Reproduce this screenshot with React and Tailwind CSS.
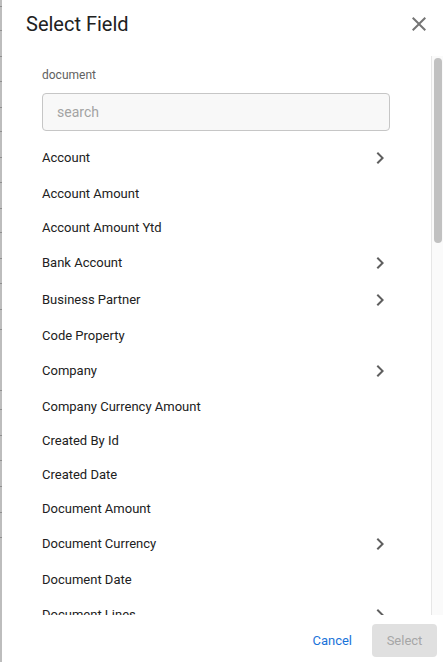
import React from "react";

const fields = [
  { name: "Account", nested: true },
  { name: "Account Amount" },
  { name: "Account Amount Ytd" },
  { name: "Bank Account", nested: true },
  { name: "Business Partner", nested: true },
  { name: "Code Property" },
  { name: "Company", nested: true },
  { name: "Company Currency Amount" },
  { name: "Created By Id" },
  { name: "Created Date" },
  { name: "Document Amount" },
  { name: "Document Currency", nested: true },
  { name: "Document Date" },
  { name: "Document Lines", nested: true },
  { name: "Document Number" },
];

// ticks of the page behind the backdrop
const ticks = [6, 30, 56, 81, 107, 131, 157, 182, 208, 232, 258, 283, 309, 329, 390, 409, 435, 460, 486, 512, 537];

const ChevronRight = () => (
  <svg viewBox="0 0 24 24" className="h-6 w-6 shrink-0 fill-[#5f5f5f]">
    <path d="M10 6 8.59 7.41 13.17 12l-4.58 4.59L10 18l6-6z" />
  </svg>
);

const CloseIcon = () => (
  <svg viewBox="0 0 24 24" className="h-6 w-6 fill-[#757575]">
    <path d="M19 6.41 17.59 5 12 10.59 6.41 5 5 6.41 10.59 12 5 17.59 6.41 19 12 13.41 17.59 19 19 17.59 13.41 12z" />
  </svg>
);

const App = () => {
  return (
    <div className="flex h-[662px] w-[443px] overflow-hidden font-['Roboto','Liberation_Sans',sans-serif]">
      <div className="relative w-[2px] shrink-0 bg-[#bdbdbd]">
        {ticks.map((t) => (
          <div key={t} className="absolute h-px w-[2px] bg-[#8f8f8f]" style={{ top: t }} />
        ))}
      </div>

      <div className="flex min-w-0 flex-1 flex-col bg-white">
        <div className="flex h-[56px] shrink-0 items-center justify-between pb-2 pl-6 pr-3">
          <h2 className="text-[20px] leading-7 text-[#212121]">Select Field</h2>
          <button type="button" className="flex items-center justify-center">
            <CloseIcon />
          </button>
        </div>

        <div className="flex min-h-0 flex-1">
          <div className="min-w-0 flex-1 overflow-hidden pl-[40px] pr-[39px] pt-[11px]">
            <p className="text-[12px] leading-4 text-[#616161]">document</p>
            <input
              type="text"
              placeholder="search"
              className="mr-[2px] mt-[10px] block h-[38px] w-[348px] rounded border border-[#c6c6c6] bg-[#f8f8f8] px-[14px] text-[14px] text-[#212121] outline-none placeholder:text-[#a3a3a3]"
            />
            <ul className="mt-[8.5px]">
              {fields.map((f) => (
                <li
                  key={f.name}
                  className={`flex items-center justify-between text-[13px] text-[#212121] ${f.nested ? "h-[37px]" : "h-[34px]"}`}
                >
                  <span>{f.name}</span>
                  {f.nested && <ChevronRight />}
                </li>
              ))}
            </ul>
          </div>
          <div className="w-[12px] shrink-0 border-l border-[#e6e6e6] bg-[#fafafa] pl-[2px] pr-[1px] pt-[2px]">
            <div className="h-[185px] rounded-full bg-[#c1c1c1]" />
          </div>
        </div>

        <div className="flex h-[47px] shrink-0 items-start justify-end pr-[6px] pt-[9px]">
          <button type="button" className="h-[33px] rounded px-[12px] text-[13px] text-[#1a73d9]">
            Cancel
          </button>
          <button
            type="button"
            disabled
            className="ml-[8px] h-[33px] w-[65px] rounded bg-[#e0e0e0] text-[13px] text-[#a6a6a6]"
          >
            Select
          </button>
        </div>
      </div>
    </div>
  );
};

export default App;
